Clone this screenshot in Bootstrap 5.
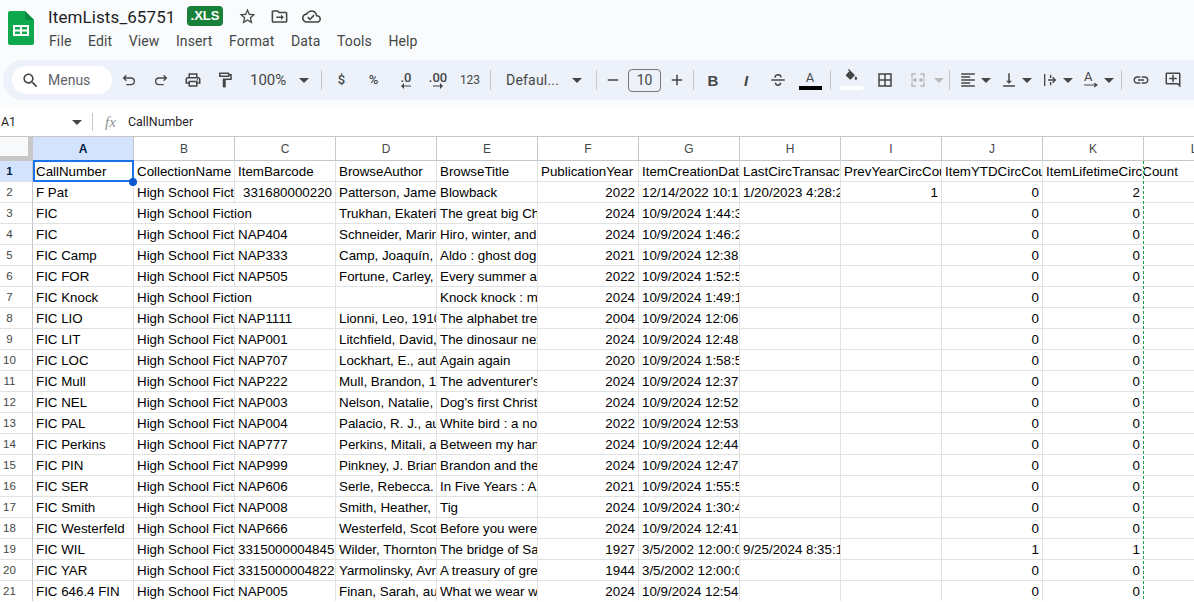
<!DOCTYPE html>
<html lang="en">
<head>
    <meta charset="UTF-8">
    <title>ItemLists_65751 - Google Sheets</title>
    <link href="https://cdn.jsdelivr.net/npm/bootstrap@5.3.2/dist/css/bootstrap.min.css" rel="stylesheet">
    <style>
        html, body { height: 602px; overflow: hidden; background: #fff; }
        body { font-family: Roboto, "Liberation Sans", sans-serif; color: #444746; }
        .app-top { height: 108px; background: #f9fbfd; }
        .title-row { height: 60px; padding-left: 8px; }
        .logo-box { width: 26px; height: 34px; margin-top: 11px; }
        .title-col { margin-left: 14px; }
        .doc-line { height: 26px; padding-top: 7px; }
        .doc-name { font-size: 17px; line-height: 26px; color: #1f1f1f; width: 139px; letter-spacing: .1px; }
        .xls-tag { background: #188038; color: #fff; font: 700 13px/20px "Liberation Sans", sans-serif; width: 36px; height: 20px; border-radius: 4px; text-align: center; margin-top: -1px; }
        .doc-icon { width: 32px; text-align: center; line-height: 0; }
        .doc-icon svg { width: 19px; height: 19px; fill: #444746; }
        .menu-line { margin-top: 6px; font-size: 14px; line-height: 18px; color: #444746; margin-left: 1px; }
        .menu-line span { margin-right: 16.5px; letter-spacing: .12px; }
        .tool-strip { height: 40px; margin-left: 3px; padding-left: 9px; background: #edf2fa; border-radius: 20px 0 0 20px; white-space: nowrap; }
        .menus-pill { width: 100px; height: 28px; background: #fff; border-radius: 14px; font-size: 14px; color: #5f6368; padding-left: 9px; flex: none; }
        .menus-pill svg { width: 19px; height: 19px; fill: #444746; margin-right: 8px; }
        .tb { width: 32px; height: 28px; flex: none; display: flex; align-items: center; justify-content: center; font-size: 12px; color: #444746; }
        .tb svg { width: 18px; height: 18px; fill: #444746; }
        .tb svg.ln { fill: none; stroke: #444746; stroke-width: 2; width: 16px; height: 16px; }
        .tb svg.ln-big { fill: none; stroke: #444746; stroke-width: 1.8; }
        .tb svg.off { fill: none; stroke: #b8bbbc; stroke-width: 2; }
        .tb-sep { width: 1px; height: 20px; background: #c7c7c7; flex: none; }
        .nudge-1 { margin-left: 1px; }
        .nudge-2 { margin-left: 2px; }
        .nudge-3 { margin-left: 3px; }
        .nudge-5 { margin-left: 5px; }
        .nudge-7 { margin-left: 7px; }
        .nudge-9 { margin-left: 9px; }
        .caret-dn { width: 0; height: 0; border-left: 5px solid transparent; border-right: 5px solid transparent; border-top: 5px solid #444746; flex: none; }
        .caret-dn.off { border-top-color: #b8bbbc; }
        .zoom-box { width: 80px; font-size: 15px; padding: 0 12px 0 9px; flex: none; }
        .font-box { width: 90px; margin-left: 15px; padding-right: 14px; font-size: 14px; flex: none; letter-spacing: .2px; }
        .size-box { width: 33px; height: 23px; border: 1px solid #747775; border-radius: 4px; font-size: 14px; text-align: center; line-height: 21px; flex: none; margin-left: -1px; }
        .dec-mark { display: flex; flex-direction: column; align-items: center; font-size: 13px; font-weight: 500; line-height: 11px; }
        .dec-mark svg { width: 10px; height: 6px; }
        .sign-mark { font-size: 13px; font-weight: 500; margin-right: 1px; }
        .bold-mark { font: 700 15px "Liberation Sans", sans-serif; margin-right: 2px; }
        .ital-mark { font: italic 700 15px "Liberation Sans", sans-serif; }
        .colour-mark { display: flex; flex-direction: column; align-items: center; width: 23px; font-size: 13px; line-height: 13px; }
        .colour-bar { width: 23px; height: 4px; margin-top: 2px; }
        .colour-mark svg { width: 15px; height: 15px; margin-top: -2px; }
        .tilt-mark { display: flex; flex-direction: column; align-items: flex-start; font-size: 13px; line-height: 12px; }
        .tilt-mark svg { width: 14px; height: 6px; fill: none; stroke: #444746; stroke-width: 1.2; }
        .with-caret { gap: 4px; flex: none; display: flex; align-items: center; }
        .with-caret .tb { width: 18px; }
        .formula-row { height: 24px; margin-top: 2px; font-size: 12.4px; color: #1f1f1f; }
        .cell-ref { width: 93px; padding: 0 11px 0 1px; border-right: 1px solid #c7c7c7; height: 18px; line-height: 18px; }
        .cell-ref .caret-dn { margin-right: -1px; }
        .fx-mark { font: italic 15px "Liberation Serif", serif; color: #8e9193; width: 35px; text-align: center; }
        .grid-wrap { margin-top: 2px; height: 465px; overflow: hidden; position: relative; border-top: 1px solid #c7c7c7; }
        .sheet-grid { border-collapse: separate; border-spacing: 0; table-layout: fixed; width: 1244px; font: 13.33px/18px "Liberation Sans", sans-serif; color: #000; }
        .sheet-grid col.rn { width: 33px; }
        .sheet-grid col.dc { width: 101px; }
        .sheet-grid td, .sheet-grid th { height: 21px; padding: 2px 0 0 3px; white-space: nowrap; overflow: hidden; border-right: 1px solid #e1e3e3; border-bottom: 1px solid #e1e3e3; font-weight: 400; }
        .sheet-grid td.text-end { padding: 2px 3px 0 0; }
        .sheet-grid thead th { height: 24px; border-right-color: #c7c7c7; border-bottom-color: #c7c7c7; text-align: center; font-size: 12px; color: #444746; padding: 0; }
        .sheet-grid tbody th { font-size: 11.5px; color: #444746; text-align: center; padding: 1px 13px 0 0; border-right-color: #c7c7c7; line-height: 18px; vertical-align: top; }
        .sheet-grid .on-sel { background: #d3e3fd; color: #041e49; font-weight: 700; }
        .sheet-grid thead th.on-sel { color: #041e49; }
        .sheet-grid tbody th.on-sel { color: #041e49; }
        .sheet-grid thead th.corner-cell { background: #f8f9fa; position: relative; border-right: 5px solid #c7c7c7; border-bottom: 5px solid #c7c7c7; }
        .sel-box { position: absolute; left: 33px; top: 23px; width: 101px; height: 22px; border: 2px solid #1a73e8; pointer-events: none; }
        .sel-dot { position: absolute; left: 129px; top: 41px; width: 8px; height: 8px; border-radius: 50%; background: #0b57d0; }
        .freeze-dash { position: absolute; left: 1143px; top: 24px; bottom: 0; width: 1px; background: repeating-linear-gradient(#1e9e50 0 3px, #fff 3px 5px); }
    </style>
</head>
<body>
<div class="app-top">
    <div class="title-row d-flex">
        <svg class="logo-box" viewBox="0 0 26 34">
            <path d="M2 0h15l9 9v23a2 2 0 0 1-2 2H2a2 2 0 0 1-2-2V2a2 2 0 0 1 2-2z" fill="#0ea84f"/>
            <path d="M17 0l9 9h-7a2 2 0 0 1-2-2z" fill="#0a8a3f"/>
            <path d="M5 14h16v11H5zM7 16v2.500h5V16zm7 0v2.500h5V16zM7 20.500V23h5v-2.500zm7 0V23h5v-2.500z" fill="#fff" fill-rule="evenodd"/>
        </svg>
        <div class="title-col">
            <div class="doc-line d-flex align-items-center">
                <div class="doc-name">ItemLists_65751</div>
                <div class="xls-tag">.XLS</div>
                <div class="doc-icon ms-2"><svg viewBox="0 0 24 24"><path d="M22 9.240l-7.190-.62L12 2 9.190 8.630 2 9.240l5.460 4.730L5.820 21 12 17.270 18.180 21l-1.630-7.030L22 9.240zM12 15.400l-3.760 2.270 1-4.280-3.320-2.880 4.380-.38L12 6.100l1.710 4.040 4.380.38-3.320 2.880 1 4.280L12 15.400z"/></svg></div>
                <div class="doc-icon"><svg viewBox="0 0 24 24"><path d="M20 6h-8l-2-2H4c-1.100 0-2 .9-2 2v12c0 1.100.9 2 2 2h16c1.100 0 2-.9 2-2V8c0-1.100-.9-2-2-2zm0 12H4V6h5.170l2 2H20v10z"/><path d="M8 12h6V9.500l3.500 3.500-3.500 3.500V14H8z"/></svg></div>
                <div class="doc-icon"><svg viewBox="0 0 24 24"><path d="M19.350 10.040C18.670 6.590 15.640 4 12 4 9.110 4 6.600 5.640 5.350 8.040 2.340 8.360 0 10.910 0 14c0 3.310 2.690 6 6 6h13c2.760 0 5-2.240 5-5 0-2.640-2.050-4.780-4.650-4.960zM19 18H6c-2.210 0-4-1.790-4-4 0-2.050 1.530-3.760 3.560-3.970l1.070-.11.5-.95C8.080 7.140 9.940 6 12 6c2.620 0 4.880 1.860 5.390 4.430l.3 1.500 1.530.11c1.560.1 2.780 1.410 2.780 2.960 0 1.650-1.350 3-3 3zm-9-3.820l-2.090-2.090L6.500 13.500 10 17l6.010-6.010-1.410-1.410z"/></svg></div>
            </div>
            <div class="menu-line d-flex">
                <span>File</span><span>Edit</span><span>View</span><span>Insert</span><span>Format</span><span>Data</span><span>Tools</span><span>Help</span>
            </div>
        </div>
    </div>
    <div class="tool-strip d-flex align-items-center">
        <div class="menus-pill d-flex align-items-center">
            <svg viewBox="0 0 24 24"><path d="M15.500 14h-.79l-.28-.27C15.410 12.590 16 11.110 16 9.500 16 5.910 13.090 3 9.500 3S3 5.910 3 9.500 5.910 16 9.500 16c1.610 0 3.090-.59 4.230-1.570l.27.28v.79l5 4.990L20.490 19l-4.990-5zm-6 0C7.010 14 5 11.990 5 9.500S7.010 5 9.500 5 14 7.010 14 9.500 11.990 14 9.500 14z"/></svg>
            Menus
        </div>
        <div class="tb nudge-1"><svg class="ln" viewBox="0 0 24 24"><path d="M8 5 4 9l4 4M4 9h11a5 5 0 0 1 0 10H8"/></svg></div>
        <div class="tb"><svg class="ln" viewBox="0 0 24 24"><path d="m16 5 4 4-4 4M20 9H9a5 5 0 0 0 0 10h7"/></svg></div>
        <div class="tb"><svg viewBox="0 0 24 24"><path d="M19 8h-1V3H6v5H5c-1.660 0-3 1.340-3 3v6h4v4h12v-4h4v-6c0-1.660-1.340-3-3-3zM8 5h8v3H8V5zm8 14H8v-4h8v4zm4-4h-2v-2H6v2H4v-4c0-.55.45-1 1-1h14c.55 0 1 .45 1 1v4z"/><circle cx="18" cy="11.500" r="1"/></svg></div>
        <div class="tb"><svg viewBox="0 0 24 24"><path d="M18 4V3c0-.55-.45-1-1-1H5c-.55 0-1 .45-1 1v4c0 .55.45 1 1 1h12c.55 0 1-.45 1-1V6h1v4H9v11c0 .55.45 1 1 1h2c.55 0 1-.45 1-1v-9h8V4h-3zm-2 2H6V4h10v2z"/></svg></div>
        <div class="zoom-box d-flex align-items-center justify-content-between">100%<span class="caret-dn"></span></div>
        <div class="tb-sep"></div>
        <div class="tb ms-1"><span class="sign-mark">$</span></div>
        <div class="tb"><span class="sign-mark">%</span></div>
        <div class="tb"><div class="dec-mark">.0<svg viewBox="0 0 10 6"><path d="M10 2.500H3V0L0 3l3 3V3.500h7z"/></svg></div></div>
        <div class="tb"><div class="dec-mark">.00<svg viewBox="0 0 10 6"><path d="M0 2.500h7V0l3 3-3 3V3.500H0z"/></svg></div></div>
        <div class="tb">123</div>
        <div class="tb-sep ms-1"></div>
        <div class="font-box d-flex align-items-center justify-content-between">Defaul...<span class="caret-dn"></span></div>
        <div class="tb-sep"></div>
        <div class="tb"><svg viewBox="0 0 24 24"><path d="M5 11h14v2H5z"/></svg></div>
        <div class="size-box">10</div>
        <div class="tb"><svg viewBox="0 0 24 24"><path d="M19 13h-6v6h-2v-6H5v-2h6V5h2v6h6z"/></svg></div>
        <div class="tb-sep"></div>
        <div class="tb ms-1"><span class="bold-mark">B</span></div>
        <div class="tb"><span class="ital-mark">I</span></div>
        <div class="tb"><svg class="ln-big" viewBox="0 0 24 24"><path d="M3 12h18M8 9c0-2.500 1.700-4 4-4s4 1.500 4 3.500M8.500 15.500c.3 2.200 1.600 3.500 3.500 3.500s3.200-1.300 3.500-3.500"/></svg></div>
        <div class="tb"><div class="colour-mark">A<div class="colour-bar bg-black"></div></div></div>
        <div class="tb-sep ms-1"></div>
        <div class="tb ms-1"><div class="colour-mark"><svg viewBox="0 0 24 24"><path d="M16.560 8.940 7.620 0 6.210 1.410l2.380 2.380-5.150 5.150c-.59.59-.59 1.540 0 2.120l5.500 5.500c.29.29.68.44 1.060.44s.77-.15 1.060-.44l5.500-5.500c.59-.58.59-1.530 0-2.120zM19 11.500s-2 2.170-2 3.500c0 1.100.9 2 2 2s2-.9 2-2c0-1.330-2-3.500-2-3.500z"/></svg><div class="colour-bar bg-white"></div></div></div>
        <div class="tb nudge-2"><svg viewBox="0 0 24 24"><path d="M3 3v18h18V3H3zm8 16H5v-6h6v6zm0-8H5V5h6v6zm8 8h-6v-6h6v6zm0-8h-6V5h6v6z"/></svg></div>
        <div class="tb nudge-1"><svg class="off" viewBox="0 0 24 24"><path d="M9 4H4v5M4 15v5h5M15 4h5v5M20 15v5h-5M3 12h6M7 9.500 9.500 12 7 14.500M21 12h-6M17 9.500 14.500 12 17 14.500"/></svg></div>
        <span class="caret-dn off"></span>
        <div class="tb-sep nudge-5"></div>
        <div class="with-caret nudge-9"><div class="tb"><svg viewBox="0 0 24 24"><path d="M15 15H3v2h12v-2zm0-8H3v2h12V7zM3 13h18v-2H3v2zm0 8h18v-2H3v2zM3 3v2h18V3H3z"/></svg></div><span class="caret-dn"></span></div>
        <div class="with-caret nudge-9"><div class="tb"><svg viewBox="0 0 24 24"><path d="M16 13h-3V3h-2v10H8l4 4 4-4zM4 19v2h16v-2H4z"/></svg></div><span class="caret-dn"></span></div>
        <div class="with-caret nudge-9"><div class="tb"><svg class="ln" viewBox="0 0 24 24"><path d="M4 3v18M9 12h11M16 8l4 4-4 4M13 4v5M13 15v5"/></svg></div><span class="caret-dn"></span></div>
        <div class="with-caret nudge-9"><div class="tb"><div class="tilt-mark">A<svg viewBox="0 0 14 6"><path d="M0 2h13M10 0l3 2-3 2"/></svg></div></div><span class="caret-dn"></span></div>
        <div class="tb-sep nudge-7"></div>
        <div class="tb nudge-3"><svg viewBox="0 0 24 24"><path d="M3.900 12c0-1.710 1.390-3.100 3.100-3.100h4V7H7c-2.760 0-5 2.240-5 5s2.240 5 5 5h4v-1.900H7c-1.710 0-3.100-1.390-3.100-3.100zM8 13h8v-2H8v2zm9-6h-4v1.900h4c1.710 0 3.100 1.390 3.100 3.100s-1.390 3.100-3.100 3.100h-4V17h4c2.760 0 5-2.240 5-5s-2.240-5-5-5z"/></svg></div>
        <div class="tb"><svg viewBox="0 0 24 24"><path d="M22 4c0-1.100-.9-2-2-2H4c-1.100 0-2 .9-2 2v12c0 1.100.9 2 2 2h14l4 4V4zm-2 13.170L18.830 16H4V4h16v13.170zM13 5h-2v4H7v2h4v4h2v-4h4V9h-4z"/></svg></div>
    </div>
</div>
<div class="formula-row d-flex align-items-center">
    <div class="cell-ref d-flex align-items-center justify-content-between">A1<span class="caret-dn"></span></div>
    <div class="fx-mark">fx</div>
    <div>CallNumber</div>
</div>
<div class="grid-wrap">
    <table class="sheet-grid">
        <colgroup id="grid-cols"></colgroup>
        <thead><tr id="grid-head"></tr></thead>
        <tbody id="grid-body"></tbody>
    </table>
    <div class="sel-box"></div>
    <div class="sel-dot"></div>
    <div class="freeze-dash"></div>
</div>
<script src="https://cdn.jsdelivr.net/npm/bootstrap@5.3.2/dist/js/bootstrap.bundle.min.js"></script>
<script>
    const LETTERS = 'ABCDEFGHIJKL'.split('');
    const SCHOOL = 'High School Fiction';
    // null means the cell is covered by the text of the cell before it
    const rows = [
        ['CallNumber', 'CollectionName', 'ItemBarcode', 'BrowseAuthor', 'BrowseTitle', 'PublicationYear', 'ItemCreationDate', 'LastCircTransactionDate', 'PrevYearCircCount', 'ItemYTDCircCount', 'ItemLifetimeCircCount', null],
        ['F Pat', SCHOOL, 331680000220, 'Patterson, James', 'Blowback', 2022, '12/14/2022 10:1', '1/20/2023 4:28:2', 1, 0, 2, ''],
        ['FIC', SCHOOL, null, 'Trukhan, Ekaterina', 'The great big Ch', 2024, '10/9/2024 1:44:3', '', '', 0, 0, ''],
        ['FIC', SCHOOL, 'NAP404', 'Schneider, Marina', 'Hiro, winter, and', 2024, '10/9/2024 1:46:2', '', '', 0, 0, ''],
        ['FIC Camp', SCHOOL, 'NAP333', 'Camp, Joaquín,', 'Aldo : ghost dog', 2021, '10/9/2024 12:38', '', '', 0, 0, ''],
        ['FIC FOR', SCHOOL, 'NAP505', 'Fortune, Carley,', 'Every summer a', 2022, '10/9/2024 1:52:5', '', '', 0, 0, ''],
        ['FIC Knock', SCHOOL, null, '', 'Knock knock : m', 2024, '10/9/2024 1:49:1', '', '', 0, 0, ''],
        ['FIC LIO', SCHOOL, 'NAP1111', 'Lionni, Leo, 1910', 'The alphabet tre', 2004, '10/9/2024 12:06', '', '', 0, 0, ''],
        ['FIC LIT', SCHOOL, 'NAP001', 'Litchfield, David,', 'The dinosaur nex', 2024, '10/9/2024 12:48', '', '', 0, 0, ''],
        ['FIC LOC', SCHOOL, 'NAP707', 'Lockhart, E., auth', 'Again again', 2020, '10/9/2024 1:58:5', '', '', 0, 0, ''],
        ['FIC Mull', SCHOOL, 'NAP222', 'Mull, Brandon, 1', "The adventurer's", 2024, '10/9/2024 12:37', '', '', 0, 0, ''],
        ['FIC NEL', SCHOOL, 'NAP003', 'Nelson, Natalie,', "Dog's first Christ", 2024, '10/9/2024 12:52', '', '', 0, 0, ''],
        ['FIC PAL', SCHOOL, 'NAP004', 'Palacio, R. J., au', 'White bird : a no', 2022, '10/9/2024 12:53', '', '', 0, 0, ''],
        ['FIC Perkins', SCHOOL, 'NAP777', 'Perkins, Mitali, a', 'Between my han', 2024, '10/9/2024 12:44', '', '', 0, 0, ''],
        ['FIC PIN', SCHOOL, 'NAP999', 'Pinkney, J. Brian', 'Brandon and the', 2024, '10/9/2024 12:47', '', '', 0, 0, ''],
        ['FIC SER', SCHOOL, 'NAP606', 'Serle, Rebecca.', 'In Five Years : A', 2021, '10/9/2024 1:55:5', '', '', 0, 0, ''],
        ['FIC Smith', SCHOOL, 'NAP008', 'Smith, Heather,', 'Tig', 2024, '10/9/2024 1:30:4', '', '', 0, 0, ''],
        ['FIC Westerfeld', SCHOOL, 'NAP666', 'Westerfeld, Scott', 'Before you were', 2024, '10/9/2024 12:41', '', '', 0, 0, ''],
        ['FIC WIL', SCHOOL, '3315000004845', 'Wilder, Thornton', 'The bridge of Sa', 1927, '3/5/2002 12:00:0', '9/25/2024 8:35:1', '', 1, 1, ''],
        ['FIC YAR', SCHOOL, '3315000004822', 'Yarmolinsky, Avr', 'A treasury of gre', 1944, '3/5/2002 12:00:0', '', '', 0, 0, ''],
        ['FIC 646.4 FIN', SCHOOL, 'NAP005', 'Finan, Sarah, au', 'What we wear w', 2024, '10/9/2024 12:54', '', '', 0, 0, '']
    ];
    function cellHtml(row, i) {
        const value = row[i];
        if (value === null) return '';
        const span = row[i + 1] === null ? ' colspan="2"' : '';
        const cls = typeof value === 'number' ? ' class="text-end"' : '';
        return `<td${span}${cls}>${value}</td>`;
    }
    document.getElementById('grid-cols').innerHTML = '<col class="rn">' + LETTERS.map(() => '<col class="dc">').join('');
    document.getElementById('grid-head').innerHTML = '<th class="corner-cell"></th>' +
        LETTERS.map((l, i) => `<th class="${i === 0 ? 'on-sel' : ''}">${l}</th>`).join('');
    document.getElementById('grid-body').innerHTML = rows.map((row, r) =>
        `<tr><th class="${r === 0 ? 'on-sel' : ''}">${r + 1}</th>${row.map((v, i) => cellHtml(row, i)).join('')}</tr>`
    ).join('');
</script>
</body>
</html>
